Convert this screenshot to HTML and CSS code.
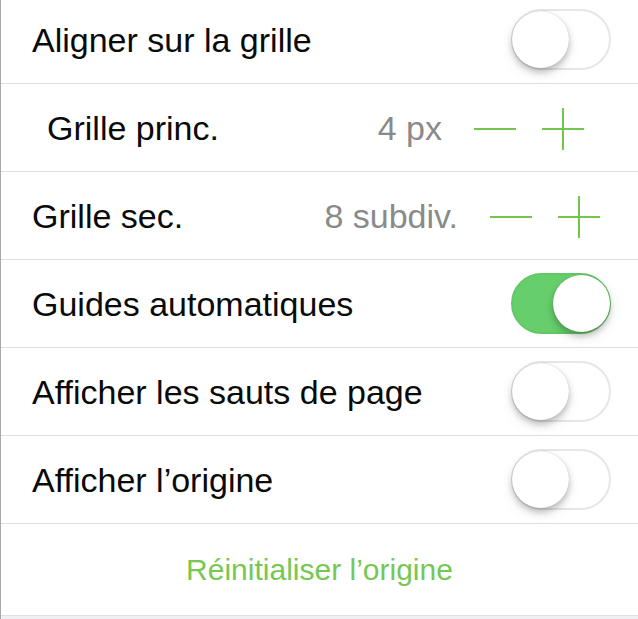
FILE: index.html
```html
<!DOCTYPE html>
<html lang="fr">
<head>
<meta charset="utf-8">
<link rel="stylesheet" href="styles.css">
</head>
<body>
<div class="panel">
  <div class="list">
    <div class="row">
      <span class="label">Aligner sur la grille</span>
      <span class="switch"><span class="knob"></span></span>
    </div>
    <div class="row row-indent">
      <span class="label">Grille princ.</span>
      <span class="value">4 px</span>
      <span class="stepper">
        <span class="btn minus"></span>
        <span class="btn plus"></span>
      </span>
    </div>
    <div class="row row-step">
      <span class="label">Grille sec.</span>
      <span class="value">8 subdiv.</span>
      <span class="stepper">
        <span class="btn minus"></span>
        <span class="btn plus"></span>
      </span>
    </div>
    <div class="row">
      <span class="label">Guides automatiques</span>
      <span class="switch on"><span class="knob"></span></span>
    </div>
    <div class="row">
      <span class="label">Afficher les sauts de page</span>
      <span class="switch"><span class="knob"></span></span>
    </div>
    <div class="row">
      <span class="label">Afficher l’origine</span>
      <span class="switch"><span class="knob"></span></span>
    </div>
    <div class="row action">
      <span class="link">Réinitialiser l’origine</span>
    </div>
  </div>
</div>
</body>
</html>
```
FILE: styles.css
```css
html, body {
  margin: 0;
  padding: 0;
  background: #ffffff;
}
body {
  font-family: "Liberation Sans", Arial, sans-serif;
  width: 638px;
  height: 619px;
  overflow: hidden;
}
.panel {
  height: 619px;
  border-left: 1.5px solid #a8a8a8;
  box-sizing: border-box;
  background: #efeff4;
  overflow: hidden;
}
.list {
  margin-top: -4px;
  background: #ffffff;
}
.row {
  height: 88px;
  box-sizing: border-box;
  border-bottom: 1px solid #e0e0e0;
  display: flex;
  align-items: center;
  padding: 2px 27px 0 31px;
  font-size: 34px;
  color: #0a0a0a;
}
.label {
  flex: 1;
  white-space: nowrap;
}
.row-indent {
  padding-left: 46px;
  padding-right: 54px;
}
.row-step {
  padding-right: 38px;
}
.value {
  color: #8a8a8a;
  margin-right: 32px;
  white-space: nowrap;
}
.stepper {
  display: flex;
  gap: 26px;
}
.btn {
  position: relative;
  width: 42px;
  height: 42px;
}
.btn::before,
.plus::after {
  content: "";
  position: absolute;
  background: #72c64e;
}
.btn::before {
  left: 0;
  right: 0;
  top: 20px;
  height: 2px;
}
.plus::after {
  top: 0;
  bottom: 0;
  left: 20px;
  width: 2px;
}
.switch {
  position: relative;
  width: 100px;
  height: 61px;
  margin-top: -2px;
  border-radius: 31px;
  box-sizing: border-box;
  border: 2px solid #e6e6e6;
  background: #ffffff;
}
.knob {
  position: absolute;
  left: -1px;
  top: 0;
  width: 57px;
  height: 57px;
  border-radius: 50%;
  background: #ffffff;
  box-shadow: 0 4px 6px rgba(0, 0, 0, 0.22), 0 0 1px rgba(0, 0, 0, 0.25), 0 6px 14px rgba(0, 0, 0, 0.08);
}
.switch.on {
  background: #66cf6c;
  border-color: #62c866;
}
.switch.on .knob {
  left: auto;
  right: -1px;
}
.action {
  height: 92px;
  justify-content: center;
  padding: 0;
}
.link {
  color: #77c753;
  font-size: 30px;
}
```
